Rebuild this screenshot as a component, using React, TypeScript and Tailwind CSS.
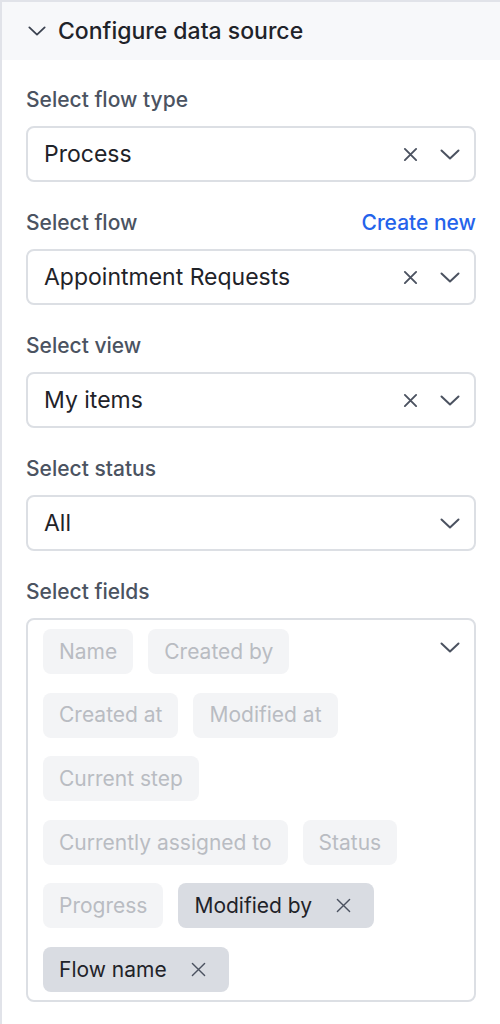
import React from "react";

const XIcon = ({ className = "" }: { className?: string }) => (
  <svg viewBox="0 0 16 16" className={className} fill="none" stroke="currentColor" strokeWidth="2" strokeLinecap="round">
    <path d="M2 2L14 14M14 2L2 14" />
  </svg>
);

const XThin = ({ className = "" }: { className?: string }) => (
  <svg viewBox="0 0 16 16" className={className} fill="none" stroke="currentColor" strokeWidth="1.5" strokeLinecap="round">
    <path d="M1.5 1.5L14.5 14.5M14.5 1.5L1.5 14.5" />
  </svg>
);

const Chevron = ({ className = "" }: { className?: string }) => (
  <svg viewBox="0 0 20 11" className={className} fill="none" stroke="currentColor" strokeWidth="2" strokeLinecap="round" strokeLinejoin="round">
    <path d="M1.5 1.5L10 9.5L18.5 1.5" />
  </svg>
);

function Select({ value, clearable = true }: { value: string; clearable?: boolean }) {
  return (
    <div className="h-[56px] rounded-[8px] border-2 border-[#dcdfe4] bg-white flex items-center pl-[16px] pr-[14px]">
      <span className="flex-1 text-[23px] text-[#1f2329]">{value}</span>
      {clearable && <XIcon className="w-[15px] h-[15px] text-[#4b5260] mr-[22px]" />}
      <Chevron className="w-[20px] h-[11px] text-[#4b5260]" />
    </div>
  );
}

function Label({ children, right }: { children: React.ReactNode; right?: React.ReactNode }) {
  return (
    <div className="flex items-center justify-between h-[24px] mb-[14px]">
      <span className="text-[21px] font-medium text-[#4b5361]">{children}</span>
      {right}
    </div>
  );
}

const disabled = [
  ["Name", "Created by"],
  ["Created at", "Modified at"],
  ["Current step"],
  ["Currently assigned to", "Status"],
];

function Chip({ text, selected = false }: { text: string; selected?: boolean }) {
  if (selected) {
    return (
      <div className="h-[45px] rounded-[8px] bg-[#d9dce2] flex items-center pl-[16px] pr-[23px] text-[21px] text-[#1f2329]">
        <span>{text}</span>
        <XThin className="w-[15px] h-[15px] text-[#4b5260] ml-[24px]" />
      </div>
    );
  }
  return (
    <div className="h-[45px] rounded-[8px] bg-[#f3f4f6] flex items-center px-[16px] text-[21px] text-[#b9bcc2]">
      {text}
    </div>
  );
}

export default function App() {
  return (
    <div
      className="w-[500px] min-h-[1024px] border-l-2 border-t-2 border-[#e1e3e9] bg-white"
      style={{ fontFamily: "Inter, 'Noto Sans', sans-serif" }}
    >
      <div className="h-[58px] bg-[#f7f8fa] flex items-center pl-[26px]">
        <Chevron className="w-[18px] h-[10px] text-[#3b4250] mr-[12px]" />
        <span className="text-[23px] font-medium text-[#1f2329]">Configure data source</span>
      </div>
      <div className="pl-[24px] pr-[24px] pt-[28px]">
        <Label>Select flow type</Label>
        <Select value="Process" />
        <div className="h-[29px]" />
        <Label right={<span className="text-[21px] font-medium text-[#2563eb]">Create new</span>}>Select flow</Label>
        <Select value="Appointment Requests" />
        <div className="h-[29px]" />
        <Label>Select view</Label>
        <Select value="My items" />
        <div className="h-[29px]" />
        <Label>Select status</Label>
        <Select value="All" clearable={false} />
        <div className="h-[29px]" />
        <Label>Select fields</Label>
        <div className="rounded-[8px] border-2 border-[#dcdfe4] flex pl-[15px] pr-[14px] pt-[9px] pb-[8px]">
          <div className="flex-1 flex flex-col gap-[18.6px]">
            {disabled.map((row, i) => (
              <div key={i} className="flex gap-[15px]">
                {row.map((t) => (
                  <Chip key={t} text={t} />
                ))}
              </div>
            ))}
            <div className="flex gap-[15px]">
              <Chip text="Progress" />
              <Chip text="Modified by" selected />
            </div>
            <div className="flex gap-[15px]">
              <Chip text="Flow name" selected />
            </div>
          </div>
          <Chevron className="w-[20px] h-[11px] text-[#4b5260] mt-[13px]" />
        </div>
      </div>
    </div>
  );
}
